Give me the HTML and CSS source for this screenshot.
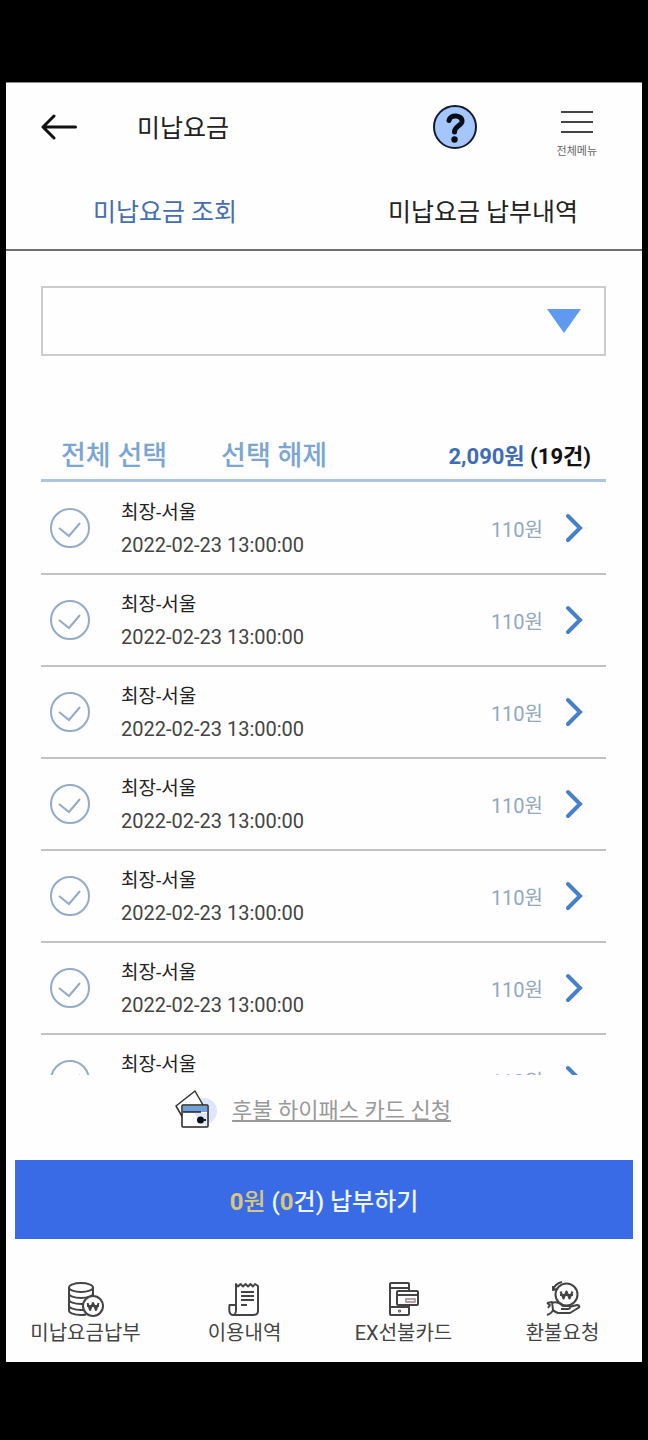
FILE: index.html
```html
<!DOCTYPE html>
<html lang="ko">
<head>
<meta charset="utf-8">
<meta name="viewport" content="width=device-width, initial-scale=1">
<title>미납요금</title>
<link rel="stylesheet" href="styles.css">
</head>
<body>
<svg class="sprite" aria-hidden="true">
  <symbol id="check" viewBox="0 0 42 42"><circle cx="21" cy="21" r="19"/><path d="M10 21l10 8 11-13"/></symbol>
  <symbol id="chevron" viewBox="0 0 18 30"><path d="M3 3l12 12L3 27"/></symbol>
</svg>
<div class="app">
  <header class="header">
    <button class="back" type="button" aria-label="뒤로">
      <svg width="36" height="26" viewBox="0 0 36 26"><path d="M13 2L2 13l11 11M2 13h32.500"/></svg>
    </button>
    <h1 class="title">미납요금</h1>
    <button class="help" type="button" aria-label="도움말">
      <svg width="46" height="46" viewBox="0 0 46 46"><circle cx="23" cy="23" r="21"/><path d="M17 16.500c1-6.500 13.500-6 13 1-.5 4.500-7.500 4.500-7.500 10.500"/><circle class="dot" cx="22.500" cy="35.500" r="3.200"/></svg>
    </button>
    <button class="menu" type="button">
      <svg width="32" height="24" viewBox="0 0 32 24"><path d="M0 2h32M0 12h32M0 22h32"/></svg>
      <span>전체메뉴</span>
    </button>
  </header>
  <nav class="tabs">
    <a class="tab tab-active" href="#unpaid" aria-current="page">미납요금 조회</a>
    <a class="tab" href="#history">미납요금 납부내역</a>
  </nav>
  <main class="content">
    <div class="picker">
      <select class="picker-select" aria-label="차량 선택"><option></option></select>
      <svg class="picker-arrow" width="34" height="24" viewBox="0 0 34 24"><path d="M0 0h34L17 24z"/></svg>
    </div>
    <div class="toolbar">
      <button class="tool" type="button">전체 선택</button>
      <button class="tool" type="button">선택 해제</button>
      <p class="total"><span class="total-sum">2,090원</span> (19건)</p>
    </div>
    <ul class="list">
      <li class="row"><label class="pick"><input class="box" type="checkbox"><svg class="tick"><use href="#check"/></svg><span class="info"><span class="route">최장-서울</span><span class="date">2022-02-23 13:00:00</span></span></label><a class="fare" href="#d1">110원<svg class="chevron"><use href="#chevron"/></svg></a></li>
      <li class="row"><label class="pick"><input class="box" type="checkbox"><svg class="tick"><use href="#check"/></svg><span class="info"><span class="route">최장-서울</span><span class="date">2022-02-23 13:00:00</span></span></label><a class="fare" href="#d2">110원<svg class="chevron"><use href="#chevron"/></svg></a></li>
      <li class="row"><label class="pick"><input class="box" type="checkbox"><svg class="tick"><use href="#check"/></svg><span class="info"><span class="route">최장-서울</span><span class="date">2022-02-23 13:00:00</span></span></label><a class="fare" href="#d3">110원<svg class="chevron"><use href="#chevron"/></svg></a></li>
      <li class="row"><label class="pick"><input class="box" type="checkbox"><svg class="tick"><use href="#check"/></svg><span class="info"><span class="route">최장-서울</span><span class="date">2022-02-23 13:00:00</span></span></label><a class="fare" href="#d4">110원<svg class="chevron"><use href="#chevron"/></svg></a></li>
      <li class="row"><label class="pick"><input class="box" type="checkbox"><svg class="tick"><use href="#check"/></svg><span class="info"><span class="route">최장-서울</span><span class="date">2022-02-23 13:00:00</span></span></label><a class="fare" href="#d5">110원<svg class="chevron"><use href="#chevron"/></svg></a></li>
      <li class="row"><label class="pick"><input class="box" type="checkbox"><svg class="tick"><use href="#check"/></svg><span class="info"><span class="route">최장-서울</span><span class="date">2022-02-23 13:00:00</span></span></label><a class="fare" href="#d6">110원<svg class="chevron"><use href="#chevron"/></svg></a></li>
      <li class="row"><label class="pick"><input class="box" type="checkbox"><svg class="tick"><use href="#check"/></svg><span class="info"><span class="route">최장-서울</span><span class="date">2022-02-23 13:00:00</span></span></label><a class="fare" href="#d7">110원<svg class="chevron"><use href="#chevron"/></svg></a></li>
    </ul>
  </main>
  <div class="apply">
    <svg width="42" height="40" viewBox="0 0 42 40">
      <circle cx="29" cy="21" r="13" fill="#dfe6fb"/>
      <path d="M8 28L1 16 20 1l8 14" fill="#fefefe" stroke="#333" stroke-width="1.500" stroke-linejoin="round"/>
      <rect x="7" y="15" width="26" height="22" rx="1" fill="#fefefe" stroke="#222" stroke-width="1.500"/>
      <path d="M20 23c2 7 4 11 12 13V23z" fill="#dfe6fb"/>
      <path d="M8 16h24v6H8z" fill="#6ea0dc"/>
      <path d="M8 22h18" stroke="#222" stroke-width="1.500"/>
      <circle cx="25.500" cy="30" r="3.500" fill="#0b0f1c"/><path d="M28 29h3v2h-3" fill="#222"/>
    </svg>
    <a class="apply-link" href="#card">후불 하이패스 카드 신청</a>
  </div>
  <button class="pay" type="button"><b class="gold">0</b><span class="gold">원</span> (<b class="gold">0</b>건) 납부하기</button>
  <nav class="bottom">
    <a class="item" href="#pay">
      <svg class="icon" viewBox="0 0 36 36"><ellipse cx="13" cy="6.500" rx="12" ry="4.500"/><path d="M1 6.500v23c0 2.500 5 4.500 12 4.500 2 0 3.500 0 5-.5M25 6.500V15M1 12.500c0 2.500 5 4.500 12 4.500s12-2 12-4.500M1 18.500C1 21 6 23 13 23h2M1 24.500C1 27 6 29 13 29h2"/><circle class="coin" cx="25" cy="25" r="10"/><path class="won" d="M19.500 22l2.500 7 3-7 3 7 2.500-7M19 25h12"/></svg>
      미납요금납부
    </a>
    <a class="item" href="#usage">
      <svg class="icon" viewBox="0 0 36 36"><path d="M9 25V3l2 2.500L13.500 3 16 5.500 18.500 3 21 5.500 23.500 3 26 5.500 28 3 31 5V30c0 3-2 4-5 4H6c-4 0-4-5-3.500-10H9v5c0 2-1 5-3 5M14 11h13M14 15h13M14 19h13M14 24h6"/></svg>
      이용내역
    </a>
    <a class="item" href="#prepaid">
      <svg class="icon" viewBox="0 0 36 36"><rect x="4" y="2" width="19" height="32" rx="1"/><path d="M4 7h19M4 26h19"/><circle cx="13.500" cy="30" r=".5"/><rect class="coin" x="11" y="10" width="21" height="14" rx="1"/><path d="M11 14h21"/><path d="M20 18h9v3h-9z" stroke="#bb9ca8"/></svg>
      EX선불카드
    </a>
    <a class="item" href="#refund">
      <svg class="icon" viewBox="0 0 36 36"><circle cx="21.500" cy="13.500" r="11"/><path class="won" d="M15.500 10.500l3 7 3-7 3 7 3-7M15 14h13"/><path d="M8 9c1-4 5-7 9-8M8 5v4l4-1"/><path d="M2 22l5-1 1 8c-1 3-3 4-6 5M2 22l3 2-2 3M7 22c5-2 8 0 11 3h6c2 1 1 3-1 3h-7M24 26l8-2c3 0 3 2 1 3l-8 5H13c-3-1-4-2-5-3"/></svg>
      환불요청
    </a>
  </nav>
</div>
</body>
</html>
```

FILE: styles.css
```css
* { box-sizing: border-box; }
body {
  margin: 0;
  min-height: 100vh;
  padding: 82px 6px 78px;
  display: flex;
  background: #000;
  color: #222;
  font-family: Roboto, "Noto Sans CJK KR", sans-serif;
}
button {
  border: 0;
  padding: 0;
  background: none;
  font: inherit;
  color: inherit;
}
a { color: inherit; text-decoration: none; }
svg { flex: none; fill: none; }
.sprite { position: absolute; width: 0; height: 0; }
.app {
  flex: 1;
  min-width: 0;
  display: flex;
  flex-direction: column;
  background: #fefefe;
  border-top: 1px solid #888;
}
.header {
  display: flex;
  align-items: center;
  height: 88px;
  padding: 0 45px 0 35px;
}
.back svg { display: block; stroke: #111; stroke-width: 3; stroke-linecap: round; stroke-linejoin: round; }
.title {
  flex: 1;
  margin: 0 0 0 60px;
  padding-bottom: 3px;
  font-size: 25px;
  font-weight: 400;
}
.help svg { display: block; fill: #a5c6fb; stroke: #131a2b; stroke-width: 2; }
.help path { fill: none; stroke: #080c18; stroke-width: 5; stroke-linecap: round; }
.help .dot { fill: #080c18; stroke: none; }
.menu {
  margin-left: 79px;
  padding-top: 16px;
  display: flex;
  flex-direction: column;
  align-items: center;
  gap: 10px;
  font-size: 11px;
  line-height: 16px;
  color: #666;
}
.menu svg { stroke: #444; stroke-width: 2; }
.tabs {
  display: grid;
  grid-template-columns: 1fr 1fr;
  border-bottom: 2px solid #707070;
}
.tab {
  padding: 23px 0 17px;
  font-size: 25px;
  line-height: 38px;
  text-align: center;
}
.tab-active { color: #456fae; }
.content {
  flex: 1 1 0;
  min-height: 0;
  display: flex;
  flex-direction: column;
  padding: 35px 36px 0 35px;
}
.picker { position: relative; }
.picker-select {
  display: block;
  width: 100%;
  height: 70px;
  appearance: none;
  border: 2px solid #ccc;
  border-radius: 0;
  background: #fefefe;
  font: inherit;
}
.picker-arrow {
  position: absolute;
  right: 25px;
  top: 23px;
  fill: #609af0;
  pointer-events: none;
}
.toolbar {
  display: flex;
  align-items: center;
  gap: 54px;
  margin-top: 70px;
  padding: 11px 15px 4px 20px;
  border-bottom: 3px solid #adc5e1;
}
.tool { font-size: 27px; line-height: 38px; font-weight: 500; color: #7ba5d3; }
.total {
  margin: 0 0 0 auto;
  padding-bottom: 5px;
  font-size: 22px;
  font-weight: 700;
  color: #111;
}
.total-sum { color: #3e6cb6; }
.list {
  flex: 1 1 0;
  min-height: 0;
  margin: 0;
  padding: 1px 0 0;
  list-style: none;
  overflow-y: auto;
  scrollbar-width: none;
}
.row {
  display: flex;
  align-items: center;
  padding: 12px 23px 12px 8px;
  border-bottom: 2px solid #c2c2c4;
}
.pick { flex: 1; display: flex; align-items: center; gap: 30px; position: relative; }
.box { position: absolute; width: 42px; height: 42px; margin: 0; opacity: 0; }
.tick { width: 42px; height: 42px; stroke: #93abc9; stroke-width: 2; }
.box:checked + .tick { stroke: #3a6be6; }
.info { display: flex; flex-direction: column; padding-top: 2px; line-height: 32px; }
.route { font-size: 19px; }
.date { font-size: 20px; color: #444; }
.fare { display: flex; align-items: center; gap: 22px; font-size: 20px; color: #92a8c0; }
.chevron { width: 18px; height: 30px; stroke: #4581c8; stroke-width: 4; stroke-linecap: round; }
.apply {
  display: flex;
  align-items: center;
  justify-content: center;
  gap: 15px;
  height: 70px;
  padding-right: 22px;
  margin-bottom: 15px;
}
.apply-link {
  padding-bottom: 4px;
  font-size: 22px;
  color: #999;
  text-decoration: underline;
  text-decoration-thickness: 2px;
  text-underline-offset: 2px;
}
.pay {
  margin: 0 9px;
  height: 79px;
  background: #3a6be6;
  color: #edf6ff;
  font-size: 24px;
  font-weight: 500;
}
.gold { color: #d8c67c; }
.bottom {
  display: grid;
  grid-template-columns: repeat(4, 1fr);
  padding: 42px 0 15px;
}
.item {
  display: flex;
  flex-direction: column;
  align-items: center;
  gap: 2px;
  font-size: 20px;
  line-height: 28px;
  color: #444;
}
.icon { width: 36px; height: 36px; stroke: #444; stroke-width: 2; stroke-linejoin: round; }
.coin { fill: #fefefe; }
```
